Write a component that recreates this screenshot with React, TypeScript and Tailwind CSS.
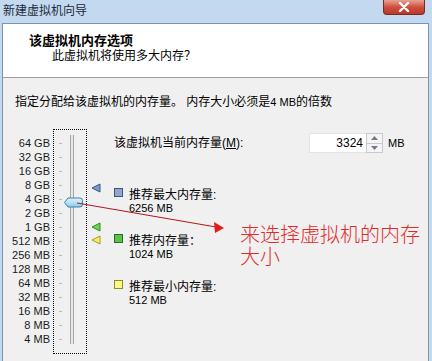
import React from "react";

const sizes = [
  "64 GB",
  "32 GB",
  "16 GB",
  "8 GB",
  "4 GB",
  "2 GB",
  "1 GB",
  "512 MB",
  "256 MB",
  "128 MB",
  "64 MB",
  "32 MB",
  "16 MB",
  "8 MB",
  "4 MB",
];

const Marker = ({ fill, stroke }: { fill: string; stroke: string }) => (
  <svg width="10" height="10" viewBox="0 0 10 10">
    <polygon points="1,5 9,1 9,9" fill={fill} stroke={stroke} strokeWidth="1" />
  </svg>
);

const Legend = ({
  box,
  title,
  value,
}: {
  box: string;
  title: string;
  value: string;
}) => (
  <div className="flex items-start">
    <div className={`w-[9px] h-[9px] mt-[-1px] border ${box}`} />
    <div className="ml-[6px] leading-[12px]">
      <div className="text-[12px]">{title}</div>
      <div className="text-[11px] mt-[1px]">{value}</div>
    </div>
  </div>
);

const App = () => {
  return (
    <div className="relative w-[432px] h-[361px] overflow-hidden flex flex-col bg-[#c3d9f0] text-black font-['Liberation_Sans','Noto_Sans_CJK_SC',sans-serif]">
      {/* title bar */}
      <div className="h-[23px] flex justify-between items-start">
        <span className="pl-[3px] pt-[3px] text-[12px] leading-[16px] text-[#1e2a3a]">
          新建虚拟机向导
        </span>
        <div className="mr-[7px] w-[42px] h-[15px] rounded-b-[4px] border border-t-0 border-[#7a2a22] bg-linear-to-b from-[#e7a295] via-[#cf4f3e] to-[#b8382a] flex items-center justify-center">
          <svg width="12" height="10" viewBox="0 0 12 10">
            <path d="M2 1 L10 9 M10 1 L2 9" stroke="#ffffff" strokeWidth="2.4" strokeLinecap="round" />
          </svg>
        </div>
      </div>

      {/* window body */}
      <div className="flex-1 flex flex-col ml-[2px] mr-[3px] border-x border-t border-[#7d93ae]">
        <div className="h-[54px] bg-white border-b border-[#a0a0a0] pl-[26px] pt-[8px]">
          <div className="text-[13px] leading-[17px] font-bold">该虚拟机内存选项</div>
          <div className="pl-[23px] text-[12px] leading-[16px] mt-[-1px]">此虚拟机将使用多大内存？</div>
        </div>

        <div className="flex-1 bg-[#f0f0f0] pt-[17px]">
          <div className="pl-[12px] text-[12px] leading-[14px]">
            指定分配给该虚拟机的内存量。 内存大小必须是<span className="text-[11px]">4 MB</span>的倍数
          </div>

          <div className="mt-[20px] flex">
            {/* size labels */}
            <div className="w-[47px] pt-[7px] text-right text-[11px] text-[#1a1a1a]">
              {sizes.map((s) => (
                <div key={s} className="h-[14px] leading-[14px]">
                  {s}
                </div>
              ))}
            </div>

            {/* slider */}
            <div className="relative ml-[3px] w-[34px] h-[225px] border border-dotted border-black flex">
              <div className="pt-[6px] pl-[5px]">
                {sizes.map((s) => (
                  <div key={s} className="h-[14px] flex items-center">
                    <div className="w-[3px] h-px bg-[#b8b8b8]" />
                  </div>
                ))}
              </div>
              <div className="ml-[8px] mt-[5px] w-[4px] h-[209px] border-x border-[#a8a8a8] bg-[#e6e6e6]" />
              <svg className="absolute left-[10px] top-[67px]" width="19" height="11" viewBox="0 0 19 11">
                <defs>
                  <linearGradient id="thumb" x1="0" y1="0" x2="0" y2="1">
                    <stop offset="0" stopColor="#e4f4fc" />
                    <stop offset="1" stopColor="#8ccbea" />
                  </linearGradient>
                </defs>
                <path d="M0.5 5.5 L4 1 L16 1 Q18.5 1 18.5 3.5 L18.5 7.5 Q18.5 10 16 10 L4 10 Z" fill="url(#thumb)" stroke="#3b7fae" strokeWidth="1" />
              </svg>
            </div>

            {/* markers */}
            <div className="ml-[4px] w-[10px] flex flex-col pt-[54px]">
              <Marker fill="#7d9ad0" stroke="#34558a" />
              <div className="mt-[29px]">
                <Marker fill="#72d35b" stroke="#2f8a1f" />
              </div>
              <div className="mt-[3px]">
                <Marker fill="#f3ee6c" stroke="#a59a1c" />
              </div>
            </div>

            {/* details */}
            <div className="ml-[13px] flex-1 flex flex-col">
              <div className="mt-[4px] h-[20px] flex items-center text-[12px]">
                <span className="w-[195px]">该虚拟机当前内存量(<span className="underline">M</span>):</span>
                <div className="w-[57px] h-[20px] bg-white border border-[#e3e3e3] border-r-0 flex items-center justify-end pr-[3px] text-[12px]">
                  3324
                </div>
                <div className="w-[17px] h-[20px] flex flex-col border border-[#c9c9c9] bg-[#f4f4f4]">
                  <div className="flex-1 flex items-center justify-center border-b border-[#c9c9c9]">
                    <svg width="7" height="4" viewBox="0 0 7 4"><polygon points="0,4 3.5,0 7,4" fill="#6b7a8c" /></svg>
                  </div>
                  <div className="flex-1 flex items-center justify-center">
                    <svg width="7" height="4" viewBox="0 0 7 4"><polygon points="0,0 3.5,4 7,0" fill="#6b7a8c" /></svg>
                  </div>
                </div>
                <span className="ml-[5px] text-[11px]">MB</span>
              </div>

              <div className="mt-[36px] flex flex-col gap-[21px]">
                <Legend box="bg-[#8fa9cc] border-[#3d5679]" title="推荐最大内存量:" value="6256 MB" />
                <Legend box="bg-[#5cc24a] border-[#2a6d1e]" title="推荐内存量：" value="1024 MB" />
                <Legend box="bg-[#fbf78a] border-[#8d8a2a]" title="推荐最小内存量:" value="512 MB" />
              </div>
            </div>
          </div>
        </div>
      </div>

      {/* annotation */}
      <svg className="absolute left-0 top-0 pointer-events-none" width="432" height="361" viewBox="0 0 432 361">
        <line x1="77" y1="203" x2="216" y2="227" stroke="#b4161b" strokeWidth="1" />
        <polygon points="224,228 214,222 215,233" fill="#e01d1d" />
      </svg>
      <div className="absolute left-[240px] top-[223px] text-[20px] leading-[22px] text-[#e42a2a] font-['Noto_Sans_CJK_SC',sans-serif] font-light">
        <div>来选择虚拟机的内存</div>
        <div>大小</div>
      </div>
    </div>
  );
};

export default App;
